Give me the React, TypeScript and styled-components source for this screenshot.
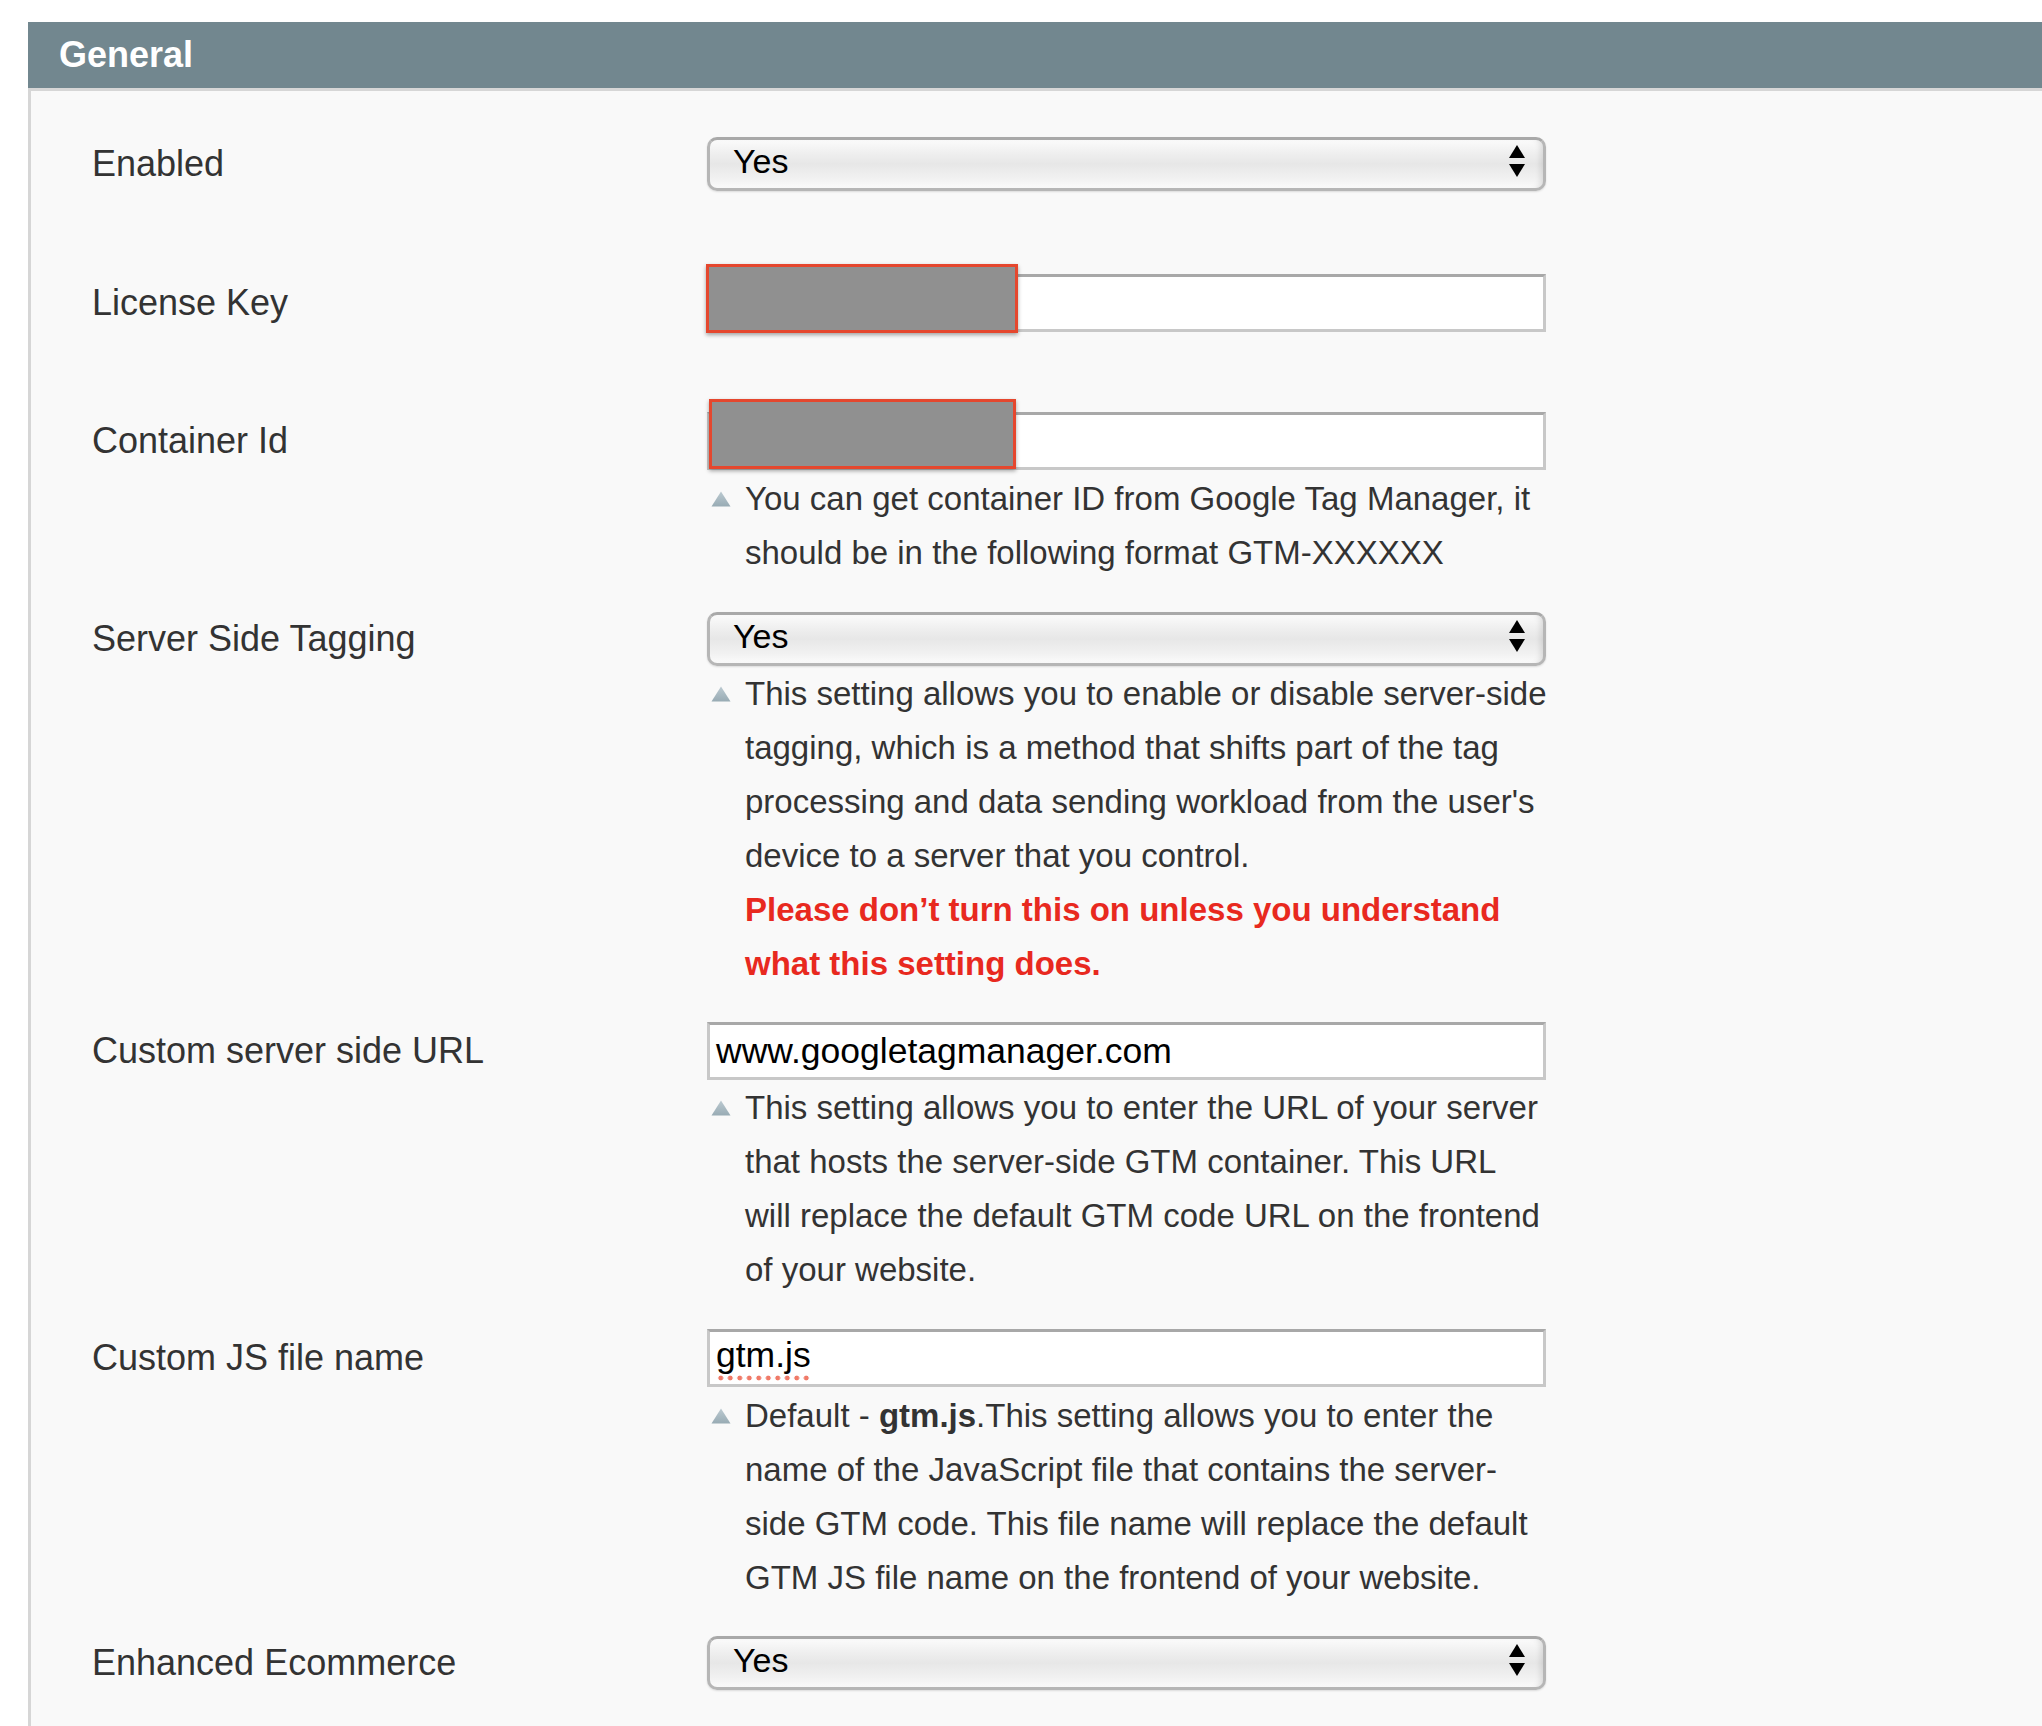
import styled, { createGlobalStyle } from 'styled-components'

const GlobalStyle = createGlobalStyle`
	html, body {
		margin: 0;
		padding: 0;
		background: #ffffff;
	}
	body {
		font-family: 'Liberation Sans', Arial, Helvetica, sans-serif;
		color: #333333;
	}
`

const Page = styled.div`
	display: flex;
	flex-direction: column;
	min-height: 100vh;
	box-sizing: border-box;
	padding: 22px 0 0 28px;
`

const SectionHeader = styled.h2`
	margin: 0;
	height: 66px;
	line-height: 66px;
	padding-left: 31px;
	background: #72878f;
	border-bottom: 3px solid #d6d6d6;
	color: #ffffff;
	font-size: 36px;
	font-weight: bold;
`

const SectionBody = styled.div`
	flex: 1;
	background: #f9f9f9;
	border-left: 3px solid #d6d6d6;
	padding: 46px 0 0 61px;
`

const Row = styled.div<{ $space: number }>`
	display: grid;
	grid-template-columns: 615px 839px;
	align-items: center;
	padding-bottom: ${(p) => p.$space}px;
`

const Label = styled.label`
	font-size: 36px;
	color: #333333;
	white-space: nowrap;
`

const SelectBox = styled.div`
	display: flex;
	align-items: center;
	justify-content: space-between;
	box-sizing: border-box;
	height: 54px;
	padding: 0 18px 6px 23px;
	border: 3px solid #b6b6b6;
	border-top-color: #a9a9a9;
	border-radius: 10px;
	background: linear-gradient(
		to bottom,
		#fbfbfb 0%,
		#eeeeee 30%,
		#e7e7e7 50%,
		#f1f1f1 80%,
		#fbfbfb 100%
	);
	box-shadow: inset -6px 0 6px -4px rgba(0, 0, 0, 0.12), 0 1px 2px rgba(0, 0, 0, 0.12);
	font-size: 34px;
	color: #000000;
	cursor: default;
`

const FieldWrap = styled.div`
	position: relative;
`

const TextField = styled.div`
	display: flex;
	align-items: center;
	box-sizing: border-box;
	height: 58px;
	padding-left: 6px;
	border: 3px solid #c8c8c8;
	border-top-color: #a8a8a8;
	background: #ffffff;
	font-size: 35.5px;
	color: #000000;
`

const Misspelled = styled.span`
	padding-bottom: 5px;
	background-image: radial-gradient(circle, #f07a68 2.2px, transparent 2.7px);
	background-size: 9.5px 6px;
	background-repeat: repeat-x;
	background-position: 0 100%;
`

const Redacted = styled.div<{ $left: number; $top: number; $w: number; $h: number }>`
	position: absolute;
	left: ${(p) => p.$left}px;
	top: ${(p) => p.$top}px;
	width: ${(p) => p.$w}px;
	height: ${(p) => p.$h}px;
	box-sizing: border-box;
	background: #909090;
	border: 3px solid #e5472e;
	box-shadow: 0 2px 4px rgba(0, 0, 0, 0.35);
`

const Hint = styled.div<{ $offset?: number }>`
	grid-column: 2;
	display: flex;
	align-items: flex-start;
	margin-top: ${(p) => p.$offset ?? 1}px;
	padding-left: 3px;
`

const HintText = styled.p`
	margin: 0 0 0 13px;
	font-size: 33px;
	line-height: 54px;
	color: #333333;
	white-space: nowrap;
`

const Warning = styled.strong`
	color: #e8291f;
`

const HintIcon = styled.svg`
	flex: none;
	margin-top: 19px;
`

const Arrows = () => (
	<svg width='16' height='32' viewBox='0 0 16 32'>
		<path d='M8 0 L16 13 L0 13 Z' fill='#000' />
		<path d='M0 19 L16 19 L8 32 Z' fill='#000' />
	</svg>
)

const Select = ({ value }: { value: string }) => (
	<SelectBox role='combobox'>
		<span>{value}</span>
		<Arrows />
	</SelectBox>
)

const NoteIcon = () => (
	<HintIcon width='22' height='16' viewBox='0 0 22 16'>
		<defs>
			<linearGradient id='note-tri' x1='0' y1='0' x2='0' y2='1'>
				<stop offset='0' stopColor='#bccad1' />
				<stop offset='1' stopColor='#98abb4' />
			</linearGradient>
		</defs>
		<path d='M11 0.5 L20.5 15.5 L1.5 15.5 Z' fill='url(#note-tri)' />
	</HintIcon>
)

export default function App() {
	return (
		<Page>
			<GlobalStyle />
			<SectionHeader>General</SectionHeader>
			<SectionBody>
				<Row $space={83}>
					<Label>Enabled</Label>
					<Select value='Yes' />
				</Row>

				<Row $space={80}>
					<Label>License Key</Label>
					<FieldWrap>
						<TextField />
						<Redacted $left={-1} $top={-10} $w={312} $h={69} />
					</FieldWrap>
				</Row>

				<Row $space={32}>
					<Label>Container Id</Label>
					<FieldWrap>
						<TextField />
						<Redacted $left={2} $top={-13} $w={307} $h={70} />
					</FieldWrap>
					<Hint $offset={2}>
						<NoteIcon />
						<HintText>
							You can get container ID from Google Tag Manager, it
							<br />
							should be in the following format GTM-XXXXXX
						</HintText>
					</Hint>
				</Row>

				<Row $space={31}>
					<Label>Server Side Tagging</Label>
					<Select value='Yes' />
					<Hint>
						<NoteIcon />
						<HintText>
							This setting allows you to enable or disable server-side
							<br />
							tagging, which is a method that shifts part of the tag
							<br />
							processing and data sending workload from the user's
							<br />
							device to a server that you control.
							<br />
							<Warning>
								Please don’t turn this on unless you understand
								<br />
								what this setting does.
							</Warning>
						</HintText>
					</Hint>
				</Row>

				<Row $space={32}>
					<Label>Custom server side URL</Label>
					<TextField>www.googletagmanager.com</TextField>
					<Hint>
						<NoteIcon />
						<HintText>
							This setting allows you to enter the URL of your server
							<br />
							that hosts the server-side GTM container. This URL
							<br />
							will replace the default GTM code URL on the frontend
							<br />
							of your website.
						</HintText>
					</Hint>
				</Row>

				<Row $space={31}>
					<Label>Custom JS file name</Label>
					<TextField>
						<Misspelled>gtm.js</Misspelled>
					</TextField>
					<Hint $offset={2}>
						<NoteIcon />
						<HintText>
							Default - <b>gtm.js</b>.This setting allows you to enter the
							<br />
							name of the JavaScript file that contains the server-
							<br />
							side GTM code. This file name will replace the default
							<br />
							GTM JS file name on the frontend of your website.
						</HintText>
					</Hint>
				</Row>

				<Row $space={40}>
					<Label>Enhanced Ecommerce</Label>
					<Select value='Yes' />
				</Row>
			</SectionBody>
		</Page>
	)
}
